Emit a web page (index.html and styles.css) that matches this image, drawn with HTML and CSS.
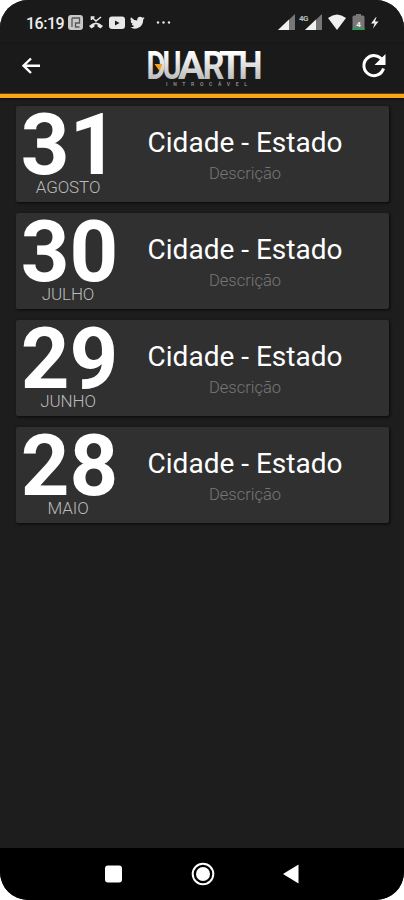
FILE: index.html
```
<!DOCTYPE html>
<html lang="pt-BR">
<head>
  <meta charset="UTF-8" />
  <meta name="viewport" content="width=device-width, initial-scale=1.0"/>
  <title>Duarth - Agenda</title>
  <link rel="stylesheet" href="styles.css">
</head>
<body>
  <div class="phone">
    <div class="status-bar">
      <span class="clock">16:19</span>
      <svg class="status-left" width="110" height="20" viewBox="66 12 110 20" fill="#e8e8e8">
        <rect x="68" y="15" width="15" height="15" rx="3" fill="#c8c8c8"/>
        <path d="M72 18h7.500v5h-4v4h4M72 18v9" fill="none" stroke="#555" stroke-width="1.300"/>
        <path d="M91.500 17l4.500 4 5-4M91.500 20v-3h3" fill="none" stroke="#e8e8e8" stroke-width="1.600"/>
        <path d="M89 26q7-7 14 0l-2.500 2.500-3-2v-2q-1.500-.7-3 0v2l-3 2z"/>
        <rect x="109" y="16.500" width="16" height="12.500" rx="3"/>
        <path d="M115 20.500v5l4.500-2.500z" fill="#1a1a1a"/>
        <path transform="translate(129.500 14.800) scale(.66)" d="M23 5a9 9 0 0 1-2.600.7 4.500 4.500 0 0 0 2-2.500 9 9 0 0 1-2.900 1.100A4.600 4.600 0 0 0 11.700 8.500 13 13 0 0 1 2.300 3.700a4.600 4.600 0 0 0 1.400 6.100 4.500 4.500 0 0 1-2-.6 4.600 4.600 0 0 0 3.600 4.600 4.600 4.600 0 0 1-2 .1 4.600 4.600 0 0 0 4.200 3.200A9.200 9.200 0 0 1 .7 19 13 13 0 0 0 20.700 7.400 9 9 0 0 0 23 5z"/>
        <circle cx="158" cy="22.500" r="1.200"/><circle cx="163.500" cy="22.500" r="1.200"/><circle cx="169" cy="22.500" r="1.200"/>
      </svg>
      <svg class="status-right" width="104" height="20" viewBox="277 12 104 20" fill="#f0f0f0">
        <path d="M278 30l17-16v16z" fill="#777"/>
        <path d="M278 30l11-10.500v10.500z"/>
        <text x="299" y="21" class="network">4G</text>
        <path d="M305 30l17-16v16z" fill="#777"/>
        <path d="M305 30l11-10.500v10.500z"/>
        <path d="M328 18q9-7 18 0l-9 12z"/>
        <path d="M356 14h5v1.500h2q1.500 0 1.500 1.500v13h-12v-13q0-1.500 1.500-1.500h2z" fill="#777"/>
        <rect x="352.500" y="28" width="12" height="2" fill="#2c9a58"/>
        <text x="356.200" y="26.500" class="charge">4</text>
        <path d="M376 17l-5 6.500h3.500l-1.500 5 5.500-7h-3.500l1.500-4.500z"/>
      </svg>
    </div>

    <header class="app-bar">
      <svg class="back" width="22" height="20" viewBox="0 0 22 20">
        <path d="M11 2.500L3.500 9.700 11 17M4 9.700h16" fill="none" stroke="#fff" stroke-width="2.400"/>
      </svg>
      <svg class="logo" width="120" height="40" viewBox="144 48 120 40">
        <defs>
          <linearGradient id="silver" gradientUnits="userSpaceOnUse" x1="0" y1="52" x2="0" y2="79">
            <stop offset="0" stop-color="#fff"/>
            <stop offset="1" stop-color="#bdbdbd"/>
          </linearGradient>
        </defs>
        <g class="brand" fill="url(#silver)">
          <text x="144.500" y="79" textLength="19" lengthAdjust="spacingAndGlyphs">D</text>
          <text x="160.500" y="79" textLength="19" lengthAdjust="spacingAndGlyphs">U</text>
          <text x="176" y="79" textLength="27" lengthAdjust="spacingAndGlyphs">A</text>
          <text x="200.500" y="79" textLength="22" lengthAdjust="spacingAndGlyphs">R</text>
          <text x="217" y="79" textLength="24" lengthAdjust="spacingAndGlyphs">T</text>
          <text x="236.500" y="79" textLength="24" lengthAdjust="spacingAndGlyphs">H</text>
        </g>
        <path d="M152.500 64h8l-3 7z" fill="#f5a11c"/>
        <text class="tagline" x="164" y="85.500" textLength="81">INTROCÁVEL</text>
      </svg>
      <svg class="refresh" width="28" height="28" viewBox="0 0 28 28">
        <path d="M22.500 8.500A10 10 0 1 0 23.500 16.500" fill="none" stroke="#fff" stroke-width="3"/>
        <path d="M25.500 2v11h-11z" fill="#fff"/>
      </svg>
    </header>

    <main class="agenda">
      <div class="card">
        <div class="date"><span class="day">31</span><span class="month">AGOSTO</span></div>
        <div class="info"><h2>Cidade - Estado</h2><p>Descrição</p></div>
      </div>
      <div class="card">
        <div class="date"><span class="day">30</span><span class="month">JULHO</span></div>
        <div class="info"><h2>Cidade - Estado</h2><p>Descrição</p></div>
      </div>
      <div class="card">
        <div class="date"><span class="day">29</span><span class="month">JUNHO</span></div>
        <div class="info"><h2>Cidade - Estado</h2><p>Descrição</p></div>
      </div>
      <div class="card">
        <div class="date"><span class="day">28</span><span class="month">MAIO</span></div>
        <div class="info"><h2>Cidade - Estado</h2><p>Descrição</p></div>
      </div>
    </main>

    <nav class="nav-bar">
      <svg width="18" height="24" viewBox="0 0 18 24"><rect x="0" y="3.500" width="17" height="17" rx="3" fill="#fff"/></svg>
      <svg width="24" height="24" viewBox="0 0 24 24"><circle cx="12" cy="12" r="10.300" fill="none" stroke="#fff" stroke-width="2"/><circle cx="12" cy="12" r="7" fill="#fff"/></svg>
      <svg width="17" height="24" viewBox="0 0 17 24"><path d="M1 12L16.500 2.500v19z" fill="#fff"/></svg>
    </nav>
  </div>
</body>
</html>
```
FILE: styles.css
```
:root {
  --bar: #1a1a1a;
  --page: #1d1d1d;
  --card: #303030;
  --accent: #f9a51a;
}

* {
  box-sizing: border-box;
}

body {
  margin: 0;
  background: #fff;
  font-family: Roboto, sans-serif;
  color: #fff;
}

.phone {
  display: flex;
  flex-direction: column;
  height: 900px;
  background: var(--page);
  border-radius: 28px;
  overflow: hidden;
}

.status-bar {
  display: flex;
  align-items: flex-start;
  height: 44px;
  padding: 12px 23px 0 26px;
  background: var(--bar);
}

.clock {
  width: 40px;
  font-size: 16px;
  font-weight: 500;
  line-height: 23px;
  letter-spacing: -0.5px;
  color: #eee;
}

.status-right {
  margin-left: auto;
}

.network,
.charge {
  font-size: 8px;
  font-weight: bold;
}

.network {
  letter-spacing: -0.5px;
  fill: #bbb;
}

.app-bar {
  display: flex;
  align-items: center;
  justify-content: space-between;
  height: 54px;
  padding: 0 16px 7px 20px;
  background: var(--bar);
  border-bottom: 4px solid var(--accent);
  box-shadow: inset 0 -1px #5e430f, 0 1px 2px #0a0a18;
}

.logo {
  margin-left: 9px;
  margin-top: 4px;
  overflow: visible;
}

.brand {
  font-size: 38px;
  font-weight: bold;
}

.tagline {
  font-size: 5px;
  font-weight: bold;
  fill: #888;
}

.agenda {
  flex: 1;
  display: flex;
  flex-direction: column;
  gap: 11px;
  padding: 8px 15px 0 16px;
}

.card {
  display: flex;
  height: 96px;
  background: var(--card);
  border-radius: 2px;
  box-shadow: 1px 1px 3px #080808;
}

.date {
  display: flex;
  flex-direction: column;
  align-items: center;
  width: 104px;
}

.day {
  margin-left: 3px;
  font-size: 85px;
  font-weight: bold;
  line-height: 79px;
}

.month {
  font-size: 17px;
  font-weight: 300;
  line-height: 4px;
  letter-spacing: -0.1px;
  color: #bbb;
}

.info {
  flex: 1;
  padding: 19px 19px 0 0;
  text-align: center;
}

h2 {
  margin: 0;
  font-size: 28px;
  font-weight: normal;
  line-height: 36px;
}

p {
  margin: 3px 0 0;
  font-size: 16.5px;
  font-weight: 300;
  line-height: 20px;
  color: #777;
}

.nav-bar {
  display: flex;
  align-items: center;
  justify-content: space-between;
  height: 52px;
  padding: 0 105px;
  background: #000;
}
```
